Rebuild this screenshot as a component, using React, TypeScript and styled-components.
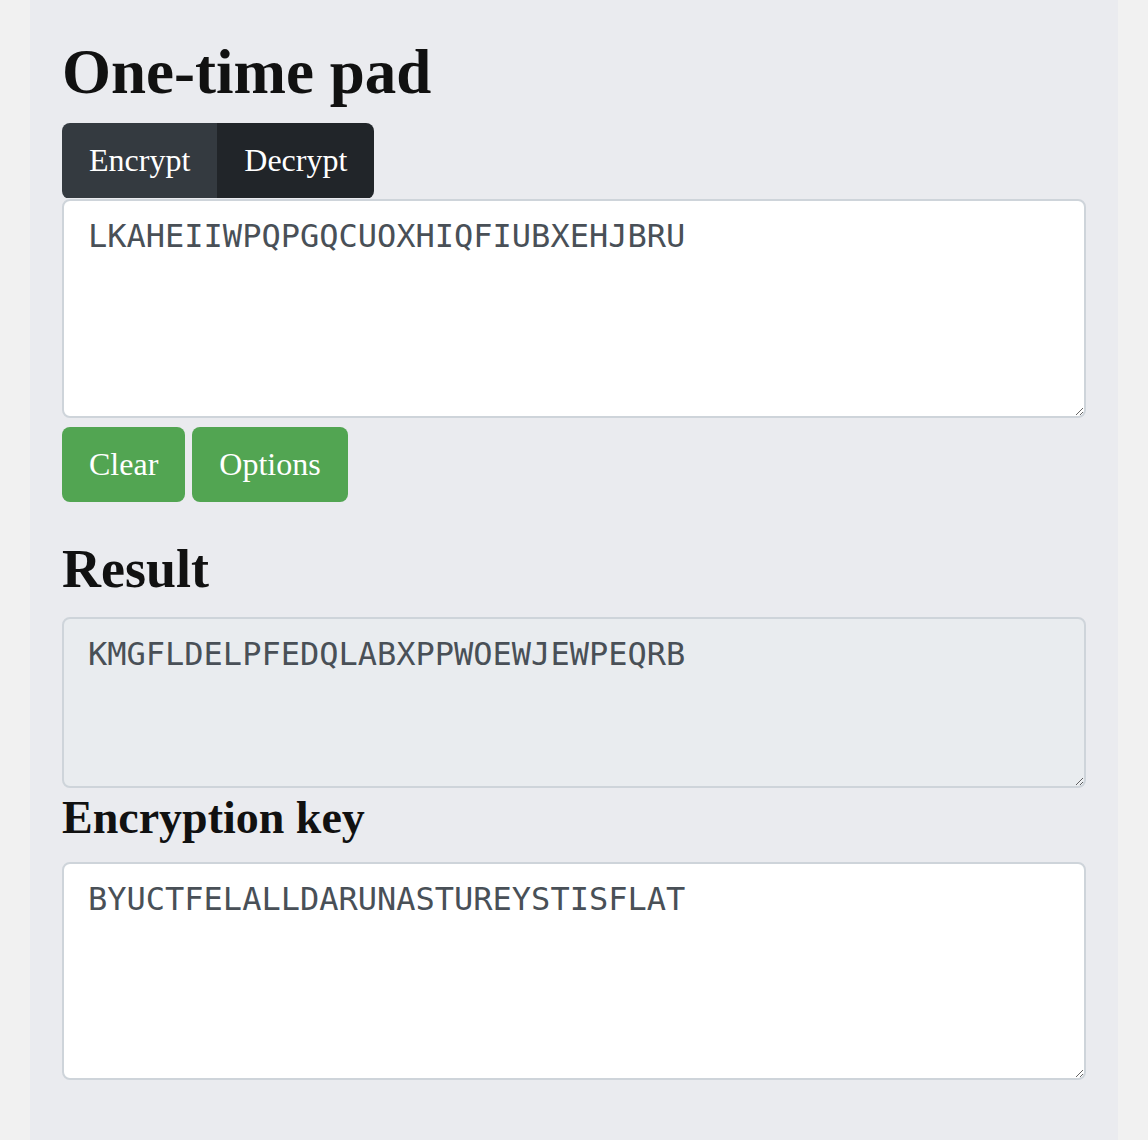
import React, { useState } from "react";
import styled, { createGlobalStyle } from "styled-components";

const GlobalStyle = createGlobalStyle`
  html, body {
    margin: 0;
    padding: 0;
    background: #f1f1f1;
  }
  * { box-sizing: border-box; }
`;

const Page = styled.div`
  padding: 0 30px;
  min-height: 1140px;
  display: flex;
`;

const Container = styled.main`
  flex: 1;
  background: #eaebef;
  padding: 36px 32px 0;
  min-height: 1140px;
  font-family: "Liberation Serif", "Times New Roman", serif;
  color: #111;
`;

const Title = styled.h1`
  margin: 0 0 15px;
  font-size: 63px;
  line-height: 72px;
  font-weight: 700;
`;

const Heading = styled.h2<{ $size: number; $lh: number; $mt: number; $mb: number }>`
  margin: ${(p) => p.$mt}px 0 ${(p) => p.$mb}px;
  font-size: ${(p) => p.$size}px;
  line-height: ${(p) => p.$lh}px;
  font-weight: 700;
`;

const TabGroup = styled.div`
  display: inline-flex;
  border-radius: 8px;
  overflow: hidden;
  vertical-align: top;
`;

const TabButton = styled.button<{ $active: boolean }>`
  height: 75px;
  padding: 0 27px;
  border: none;
  background: ${(p) => (p.$active ? "#212529" : "#343a40")};
  color: #fff;
  font-family: "Liberation Serif", "Times New Roman", serif;
  font-size: 32px;
  cursor: pointer;
  display: flex;
  align-items: center;
`;

const TabRow = styled.div`
  display: flex;
  height: 76px;
`;

const TextArea = styled.textarea<{ $height: number; $readonly?: boolean }>`
  display: block;
  width: 100%;
  height: ${(p) => p.$height}px;
  padding: 11px 24px 13px;
  border: 2px solid #ced4da;
  border-radius: 8px;
  background: ${(p) => (p.$readonly ? "#e9ecef" : "#ffffff")};
  color: #495057;
  font-family: "DejaVu Sans Mono", Menlo, monospace;
  font-size: 32px;
  line-height: 48px;
  outline: none;
  resize: vertical;
`;

const ButtonRow = styled.div`
  display: flex;
  gap: 7px;
  margin-top: 9px;
`;

const GreenButton = styled.button`
  height: 75px;
  padding: 0 27px;
  border: none;
  border-radius: 8px;
  background: #52a552;
  color: #fff;
  font-family: "Liberation Serif", "Times New Roman", serif;
  font-size: 32px;
  display: flex;
  align-items: center;
  cursor: pointer;
`;

export default function App() {
  const [mode, setMode] = useState<"encrypt" | "decrypt">("decrypt");
  const [input, setInput] = useState("LKAHEIIWPQPGQCUOXHIQFIUBXEHJBRU");
  const [key, setKey] = useState("BYUCTFELALLDARUNASTUREYSTISFLAT");

  return (
    <>
      <GlobalStyle />
      <Page>
        <Container>
          <Title>One-time pad</Title>
          <TabRow>
            <TabGroup>
              <TabButton $active={mode === "encrypt"} onClick={() => setMode("encrypt")}>
                Encrypt
              </TabButton>
              <TabButton $active={mode === "decrypt"} onClick={() => setMode("decrypt")}>
                Decrypt
              </TabButton>
            </TabGroup>
          </TabRow>
          <TextArea $height={219} value={input} onChange={(e) => setInput(e.target.value)} spellCheck={false} />
          <ButtonRow>
            <GreenButton onClick={() => setInput("")}>Clear</GreenButton>
            <GreenButton>Options</GreenButton>
          </ButtonRow>
          <Heading $size={54} $lh={60} $mt={37} $mb={18}>
            Result
          </Heading>
          <TextArea $height={171} $readonly readOnly value="KMGFLDELPFEDQLABXPPWOEWJEWPEQRB" spellCheck={false} />
          <Heading $size={46} $lh={52} $mt={4} $mb={18}>
            Encryption key
          </Heading>
          <TextArea $height={218} value={key} onChange={(e) => setKey(e.target.value)} spellCheck={false} />
        </Container>
      </Page>
    </>
  );
}
